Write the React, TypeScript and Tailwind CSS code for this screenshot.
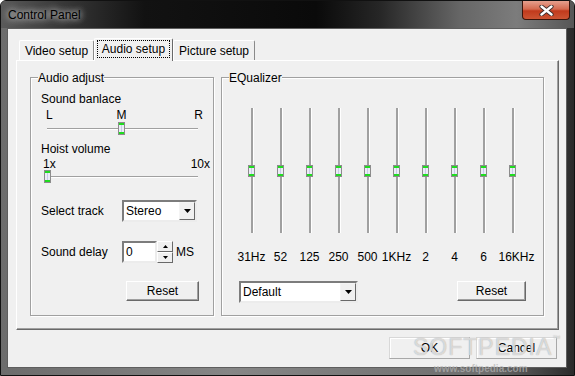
import React from "react"

const Thumb = ({ h }: { h: string }) => (
  <div className={`flex w-[7px] flex-col border border-[#8c8c8c] bg-[#ececf6] ${h}`}>
    <div className="h-[2px] bg-[#1fdc1f]" />
    <div className="flex flex-1 justify-center">
      <div className="w-[1px] bg-[#c9c9ea]" />
    </div>
    <div className="h-[2px] bg-[#1fdc1f]" />
  </div>
)

const HSlider = ({ pos }: { pos: number }) => (
  <div className="relative h-[13px] w-[157px]">
    <div className="absolute left-[3px] right-[3px] top-[6px] h-[2px] border-t border-[#a0a0a0] bg-white" />
    <div className="absolute top-0" style={{ left: pos }}>
      <Thumb h="h-[13px]" />
    </div>
  </div>
)

const VSlider = () => (
  <div className="relative h-[125px] w-[29px]">
    <div className="absolute left-[14px] top-0 h-full w-[2px] bg-[#a0a0a0] shadow-[1px_0_0_#ffffff]" />
    <div className="absolute left-[11px] top-[57px]">
      <Thumb h="h-[12px]" />
    </div>
  </div>
)

const Arrow = ({ up, w = 7 }: { up?: boolean; w?: number }) => (
  <svg width={w} height={Math.ceil(w / 2)} viewBox={`0 0 ${w} ${Math.ceil(w / 2)}`}>
    {up ? (
      <polygon points={`0,${Math.ceil(w / 2)} ${w},${Math.ceil(w / 2)} ${w / 2},0`} fill="#000" />
    ) : (
      <polygon points={`0,0 ${w},0 ${w / 2},${Math.ceil(w / 2)}`} fill="#000" />
    )}
  </svg>
)

const Combo = ({ value, w }: { value: string; w: string }) => (
  <div className={`flex h-[22px] border-2 border-t-[#7c7c7c] border-l-[#7c7c7c] border-r-[#ececec] border-b-[#ececec] bg-white ${w}`}>
    <div className="flex flex-1 items-center pl-[2px]">{value}</div>
    <div className="flex h-full w-[16px] items-center justify-center border border-t-[#f4f4f4] border-l-[#f4f4f4] border-r-[#696969] border-b-[#696969] bg-[#f0f0f0]">
      <Arrow />
    </div>
  </div>
)

const Btn = ({ label, w }: { label: string; w: string }) => (
  <div className={`flex h-[20px] items-center justify-center border border-t-white border-l-white border-r-[#696969] border-b-[#696969] bg-[#f0f0f0] shadow-[inset_-1px_-1px_0_#a0a0a0] ${w}`}>
    {label}
  </div>
)

const freqs = ["31Hz", "52", "125", "250", "500", "1KHz", "2", "4", "6", "16KHz"]

export default function App() {
  return (
    <div className="relative flex h-[376px] w-[575px] flex-col overflow-hidden rounded-t-[6px] border border-[#111111] bg-[#777777] font-['Liberation_Sans',Arial,sans-serif] text-[12px] leading-[14px] text-black">
      {/* title bar */}
      <div className="flex h-[27px] shrink-0 items-start justify-between bg-[linear-gradient(90deg,#5a5a5a_0%,#3a3a3a_10%,#121212_25%,#0a0a0a_55%,#262626_66%,#666666_80%,#7c7c7c_90%,#565656_100%)]">
        <div className="pl-[7px] pt-[7px] [text-shadow:0_0_6px_rgba(255,255,255,0.9),0_0_10px_rgba(255,255,255,0.6)]">Control Panel</div>
        <div className="mr-[4px] flex h-[19px] w-[48px] items-center justify-center rounded-b-[4px] border border-t-0 border-[#3a140a] bg-[linear-gradient(180deg,#e6a08e_0%,#d56a50_45%,#c13a1c_55%,#cc5433_100%)]">
          <svg width="15" height="11" viewBox="0 0 15 11">
            <path d="M2.5 1.5 L12.5 9.5 M12.5 1.5 L2.5 9.5" stroke="#3b2a28" strokeWidth="4.2" strokeLinecap="round" />
            <path d="M2.5 1.5 L12.5 9.5 M12.5 1.5 L2.5 9.5" stroke="#ffffff" strokeWidth="2.4" strokeLinecap="round" />
          </svg>
        </div>
      </div>

      {/* frame + client */}
      <div className="flex-1 bg-[linear-gradient(90deg,#6c6c6c_0%,#868686_40%,#6e6e6e_85%,#2a2a2a_100%)] pb-[7px] pl-[6px] pr-[7px]">
        <div className="flex h-[340px] w-[560px] flex-col border border-[#5e5e5e] bg-[#f0f0f0] pl-[8px] pt-[9px]">
          {/* tabs */}
          <div className="ml-[3px] flex h-[22px] items-end">
            <div className="flex h-[20px] w-[75px] items-center justify-center rounded-t-[2px] border-l border-r border-t border-l-white border-r-[#8a8a8a] border-t-white">Video setup</div>
            <div className="relative z-10 -mb-[1px] flex h-[23px] w-[79px] rounded-t-[2px] border-l border-r border-t border-l-white border-r-[#696969] border-t-white bg-[#f0f0f0] px-[2px] pb-[3px] pt-[1px]">
              <div className="flex h-full w-full items-center justify-center border border-dotted border-black">Audio setup</div>
            </div>
            <div className="flex h-[20px] w-[82px] items-center justify-center rounded-t-[2px] border-l border-r border-t border-l-white border-r-[#8a8a8a] border-t-white">Picture setup</div>
          </div>

          {/* panel */}
          <div className="h-[270px] w-[543px] border border-b-[#696969] border-l-white border-r-[#696969] border-t-white pl-[13px] pt-[16px] shadow-[inset_-1px_-1px_0_#a0a0a0]">
            <div className="flex gap-[7px]">
              {/* audio adjust */}
              <div className="relative flex h-[239px] w-[184px] flex-col items-start border border-[#a0a0a0] shadow-[inset_1px_1px_0_#ffffff,1px_1px_0_#ffffff]">
                <span className="absolute -top-[7px] left-[7px] bg-[#f0f0f0]">Audio adjust</span>
                <div className="ml-[10px] mt-[14px]">Sound banlace</div>
                <div className="ml-[15px] mt-[2px] flex w-[157px] justify-between">
                  <span>L</span>
                  <span className="-translate-x-[2px]">M</span>
                  <span>R</span>
                </div>
                <div className="ml-[13px]">
                  <HSlider pos={74} />
                </div>
                <div className="ml-[10px] mt-[7px]">Hoist volume</div>
                <div className="ml-[12px] mt-[2px] flex w-[167px] justify-between leading-[12px]">
                  <span>1x</span>
                  <span>10x</span>
                </div>
                <div className="ml-[13px]">
                  <HSlider pos={0} />
                </div>
                <div className="ml-[10px] mt-[17px] flex h-[22px] items-center">
                  <span className="w-[81px]">Select track</span>
                  <Combo value="Stereo" w="w-[75px]" />
                </div>
                <div className="ml-[10px] mt-[19px] flex h-[22px] items-center">
                  <span className="w-[81px]">Sound delay</span>
                  <div className="flex h-[22px] w-[35px] items-center border-2 border-b-[#ececec] border-l-[#7c7c7c] border-r-[#ececec] border-t-[#7c7c7c] bg-white pl-[2px]">0</div>
                  <div className="flex h-[22px] w-[16px] flex-col">
                    <div className="flex h-[11px] items-center justify-center border border-b-[#696969] border-l-white border-r-[#696969] border-t-white bg-[#f0f0f0]">
                      <Arrow up w={5} />
                    </div>
                    <div className="flex h-[11px] items-center justify-center border border-b-[#696969] border-l-white border-r-[#696969] border-t-white bg-[#f0f0f0]">
                      <Arrow w={5} />
                    </div>
                  </div>
                  <span className="ml-[3px]">MS</span>
                </div>
                <div className="ml-[95px] mt-[18px]">
                  <Btn label="Reset" w="w-[73px]" />
                </div>
              </div>

              {/* equalizer */}
              <div className="relative flex h-[239px] w-[323px] flex-col items-start border border-[#a0a0a0] shadow-[inset_1px_1px_0_#ffffff,1px_1px_0_#ffffff]">
                <span className="absolute -top-[7px] left-[7px] bg-[#f0f0f0]">EQualizer</span>
                <div className="ml-[15px] mt-[30px] flex">
                  {freqs.map((f) => (
                    <VSlider key={f} />
                  ))}
                </div>
                <div className="ml-[15px] mt-[17px] flex">
                  {freqs.map((f, i) => (
                    <div key={f} className={`flex w-[29px] justify-center whitespace-nowrap ${i === 9 ? "pl-[8px]" : ""}`}>
                      {f}
                    </div>
                  ))}
                </div>
                <div className="ml-[17px] mt-[17px] flex items-start">
                  <Combo value="Default" w="w-[119px]" />
                  <div className="ml-[99px]">
                    <Btn label="Reset" w="w-[69px]" />
                  </div>
                </div>
              </div>
            </div>
          </div>

          {/* dialog buttons */}
          <div className="mt-[7px] flex justify-end gap-[6px] pr-[9px]">
            <div className="flex h-[22px] w-[81px] items-center justify-center border border-b-[#a8a8a8] border-l-[#d8d8d8] border-r-[#a8a8a8] border-t-[#d8d8d8] bg-[#f0f0f0] shadow-[inset_1px_1px_0_#ffffff]">OK</div>
            <div className="flex h-[22px] w-[81px] items-center justify-center border border-b-[#a8a8a8] border-l-[#d8d8d8] border-r-[#a8a8a8] border-t-[#d8d8d8] bg-[#f0f0f0] shadow-[inset_1px_1px_0_#ffffff]">Cancel</div>
          </div>
        </div>
      </div>

      {/* watermark */}
      <div className="pointer-events-none absolute left-[412px] top-[334px] text-[23px] leading-[24px] tracking-[1px] text-white/60 [text-shadow:0_0_1px_#9a9a9a]">
        SOFTPEDIA<span className="align-top text-[8px] leading-[8px]">™</span>
      </div>
      <div className="pointer-events-none absolute left-[433px] top-[362px] text-[10px] font-bold leading-[11px] text-[#b4b4b4]/70">www.softpedia.com</div>
    </div>
  )
}
